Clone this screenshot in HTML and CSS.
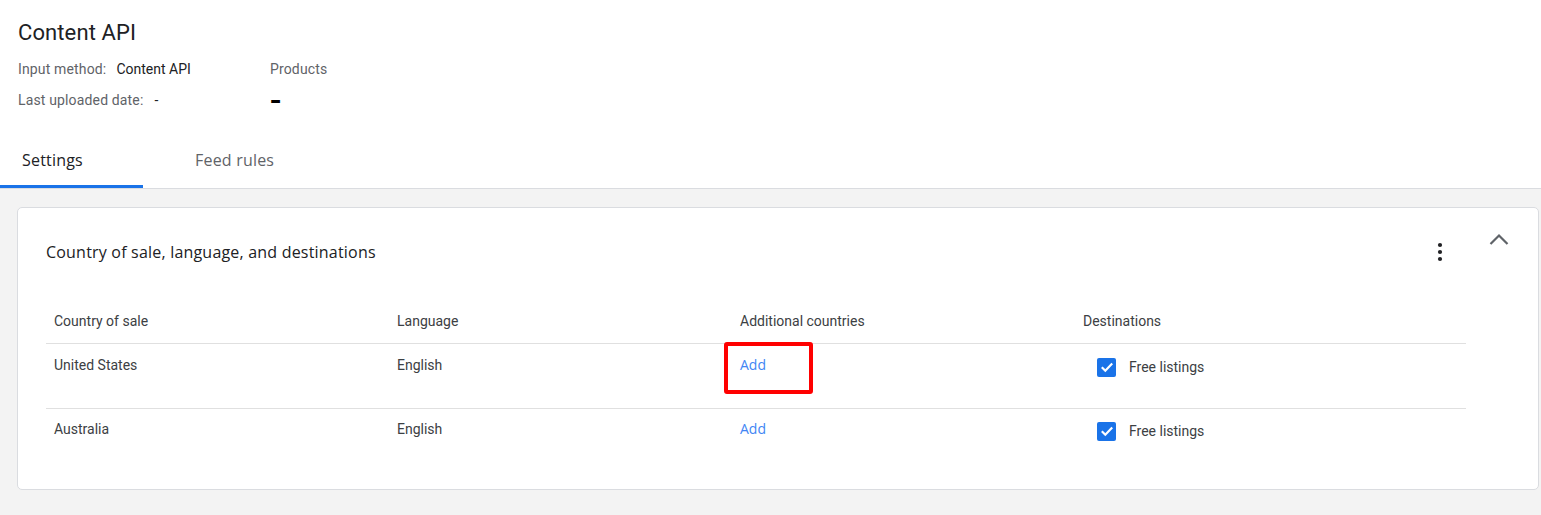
FILE: index.html
```html
<!DOCTYPE html>
<html lang="en">
<head>
<meta charset="utf-8">
<title>Content API</title>
<link rel="stylesheet" href="styles.css">
</head>
<body>
<header class="page-head">
  <h1 class="title">Content API</h1>
  <div class="meta">
    <div class="meta-item"><span class="meta-label">Input method:</span><span class="meta-value">Content API</span></div>
    <div class="meta-item"><span class="meta-label">Products</span></div>
    <div class="meta-item"><span class="meta-label">Last uploaded date:</span><span class="meta-value meta-value--plain">-</span></div>
    <div class="meta-item"><span class="meta-dash">–</span></div>
  </div>
</header>
<nav class="tabs">
  <div class="tab tab--active">Settings</div>
  <div class="tab">Feed rules</div>
</nav>
<main class="content">
  <section class="card">
    <div class="card-main">
      <div class="card-head">
        <h2 class="card-title">Country of sale, language, and destinations</h2>
        <button class="icon-btn" aria-label="More">
          <svg width="8" height="20" viewBox="0 0 8 20"><circle cx="4" cy="3" r="2.1" fill="#202124"/><circle cx="4" cy="10" r="2.1" fill="#202124"/><circle cx="4" cy="17" r="2.1" fill="#202124"/></svg>
        </button>
      </div>
      <div class="table">
        <div class="tr th">
          <div class="td">Country of sale</div>
          <div class="td">Language</div>
          <div class="td">Additional countries</div>
          <div class="td">Destinations</div>
          <div class="td"></div>
        </div>
        <div class="tr">
          <div class="td">United States</div>
          <div class="td">English</div>
          <div class="td td--add"><a class="link">Add</a><span class="highlight"></span></div>
          <div class="td"><div class="dest"><span class="checkbox"><svg width="18" height="18" viewBox="0 0 18 18"><polyline points="3.8,9.3 7.3,12.7 14.2,5.6" fill="none" stroke="#fff" stroke-width="2.2"/></svg></span><span>Free listings</span></div></div>
          <div class="td"></div>
        </div>
        <div class="tr tr--last">
          <div class="td">Australia</div>
          <div class="td">English</div>
          <div class="td"><a class="link">Add</a></div>
          <div class="td"><div class="dest"><span class="checkbox"><svg width="18" height="18" viewBox="0 0 18 18"><polyline points="3.8,9.3 7.3,12.7 14.2,5.6" fill="none" stroke="#fff" stroke-width="2.2"/></svg></span><span>Free listings</span></div></div>
          <div class="td"></div>
        </div>
      </div>
    </div>
    <div class="card-aside">
      <button class="icon-btn icon-btn--collapse" aria-label="Collapse">
        <svg width="20" height="13" viewBox="0 0 20 13"><polyline points="1.5,11 10,2.5 18.5,11" fill="none" stroke="#5f6368" stroke-width="2.2"/></svg>
      </button>
    </div>
  </section>
</main>
</body>
</html>
```

FILE: styles.css
```css
* { box-sizing: border-box; }

html, body {
  margin: 0;
  padding: 0;
}

body {
  background: #f3f3f3;
  font-family: Roboto, "Liberation Sans", Arial, sans-serif;
  color: #202124;
  font-size: 14px;
  line-height: 20px;
}

.page-head {
  background: #fff;
  padding: 19px 18px 26px;
}

.title {
  margin: 0;
  font-size: 22px;
  line-height: 28px;
  font-weight: 400;
  color: #202124;
  letter-spacing: 0.1px;
}

.meta {
  display: grid;
  grid-template-columns: 252px auto;
  row-gap: 11px;
  margin-top: 12px;
}

.meta-item {
  display: flex;
  align-items: center;
  height: 20px;
}

.meta-label {
  color: #5f6368;
  letter-spacing: 0.15px;
}

.meta-value {
  margin-left: 10px;
  color: #202124;
}

.meta-value--plain {
  margin-left: 11px;
}

.meta-dash {
  font-weight: 900;
  font-size: 17px;
  color: #000;
  position: relative;
  top: 2px;
  transform: scaleY(1.4);
}

.tabs {
  display: flex;
  background: #fff;
  border-bottom: 1px solid #dadce0;
}

.tab {
  font-family: "Open Sans", "Noto Sans", sans-serif;
  font-size: 16px;
  font-weight: 500;
  letter-spacing: 0.2px;
  color: #5f6368;
  padding: 14px 0 15px 22px;
  height: 52px;
  line-height: 20px;
  border-bottom: 3px solid transparent;
}

.tab--active {
  width: 143px;
  color: #202124;
  border-bottom-color: #1a73e8;
}

.tab + .tab {
  margin-left: 30px;
}

.content {
  padding: 18px 2px 25px 17px;
}

.card {
  display: flex;
  background: #fff;
  border: 1px solid #dadce0;
  border-radius: 5px;
  padding: 20px 0 16px 28px;
}

.card-main {
  flex: 1;
}

.card-aside {
  width: 72px;
  display: flex;
  justify-content: center;
}

.card-head {
  display: flex;
  align-items: center;
  justify-content: space-between;
  height: 48px;
  padding-right: 14px;
  margin-bottom: 23px;
}

.card-title {
  margin: 0;
  font-family: "Open Sans", "Noto Sans", sans-serif;
  font-size: 16px;
  font-weight: 500;
  letter-spacing: 0.2px;
  color: #202124;
}

.icon-btn {
  background: none;
  border: 0;
  padding: 0;
  width: 24px;
  height: 24px;
  display: flex;
  align-items: center;
  justify-content: center;
}

.icon-btn--collapse {
  width: 24px;
  height: 24px;
  margin-top: -1px;
  margin-left: -6px;
}

.table {
  display: flex;
  flex-direction: column;
}

.tr {
  display: grid;
  grid-template-columns: 343px 343px 343px 343px 1fr;
  height: 65px;
  border-bottom: 1px solid #e0e0e0;
  color: #3c4043;
}

.tr--last {
  border-bottom: 0;
  height: 64px;
}

.th {
  height: 45px;
  align-items: center;
  color: #3c4043;
}

.td {
  padding: 0 8px;
}

.tr:not(.th) .td {
  padding-top: 11px;
}

.tr--last .td {
  padding-top: 10px !important;
}

.td--add {
  position: relative;
}

.link {
  font-family: "Open Sans", "Noto Sans", sans-serif;
  color: #4285f4;
  font-weight: 500;
  cursor: pointer;
}

.highlight {
  position: absolute;
  left: -8px;
  top: -2px;
  width: 89px;
  height: 52px;
  border: 4px solid #ff0000;
  border-radius: 3px;
}

.dest {
  display: flex;
  align-items: center;
  height: 24px;
  padding-left: 14px;
}

.checkbox {
  width: 19px;
  height: 19px;
  background: #1a73e8;
  border-radius: 2px;
  display: flex;
  align-items: center;
  justify-content: center;
  margin-right: 13px;
}

.checkbox svg {
  display: block;
}
```
